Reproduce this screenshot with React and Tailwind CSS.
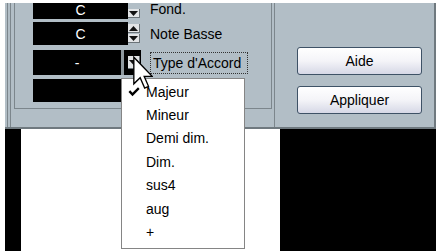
import React from 'react';

const items = ['Majeur', 'Mineur', 'Demi dim.', 'Dim.', 'sus4', 'aug', '+'];

const Tri = ({ up }) => (
  <svg width="9" height="5" viewBox="0 0 9 5">
    <path d={up ? 'M0 5 L4.5 0 L9 5 Z' : 'M0 0 L9 0 L4.5 5 Z'} fill="#111" />
  </svg>
);

const SpinBtn = ({ up, h = 'h-[9px]' }) => (
  <div className={`w-[12px] ${h} bg-[#e2e4e6] border-b border-r border-[#6b7378] flex items-center justify-center`}>
    <Tri up={up} />
  </div>
);

const Field = ({ value, w = 'w-[95px]' }) => (
  <div className={`${w} h-full bg-black text-white flex items-center justify-center`}>{value}</div>
);

const Button = ({ children, mt }) => (
  <div
    className={`${mt} w-[125px] h-[28px] rounded-[3px] border border-[#3e5266] bg-gradient-to-b from-white via-[#f4f4f8] to-[#d6d8e6] flex items-center justify-center text-black`}
  >
    {children}
  </div>
);

export default function App() {
  return (
    <div className="relative w-[440px] h-[251px] overflow-hidden bg-white text-[14px] leading-none font-['Liberation_Sans',Arial,sans-serif]">
      <div className="h-[3px]" />
      {/* dialog */}
      <div className="ml-[5px] w-[431px] h-[126px] flex bg-[#b2bec6] border-r-2 border-b-2 border-[#6f797f]">
        {/* left pane */}
        <div className="w-[269px] h-full pl-[2px] flex">
          <div className="h-full border-l border-[#7c868c] pl-[2px] flex">
            <div className="h-full border-l border-[#7c868c] flex-1 pl-[3px]">
              <div className="w-[258px] h-[106px] border-l border-r border-b border-[#7c868c] pl-[18px] flex flex-col text-black">
                {/* row 1 */}
                <div className="h-[16px] flex items-center">
                  <div className="w-[95px] h-full bg-black text-white flex items-end justify-center pb-[2px]">C</div>
                  <div className="w-[13px] h-full flex flex-col justify-end pb-[1px]">
                    <SpinBtn />
                  </div>
                  <div className="ml-[9px] self-start mt-[-1px]">Fond.</div>
                </div>
                {/* row 2 */}
                <div className="mt-[3px] h-[23px] flex items-center">
                  <Field value="C" />
                  <div className="w-[13px] h-full flex flex-col justify-center gap-[1px]">
                    <SpinBtn up />
                    <SpinBtn />
                  </div>
                  <div className="ml-[9px]">Note Basse</div>
                </div>
                {/* row 3 */}
                <div className="mt-[5px] h-[25px] flex items-center">
                  <Field value="-" w="w-[88px]" />
                  <div className="w-[3px] h-full bg-[#8e989e]" />
                  <div className="w-[4px] h-full bg-black" />
                  <div className="w-[13px] h-full bg-black flex items-center">
                    <SpinBtn h="h-[13px]" />
                  </div>
                  <div className="ml-[9px] h-[22px] w-[98px] px-[2px] border border-dotted border-[#333] flex items-center">
                    Type d'Accord
                  </div>
                </div>
                {/* row 4 */}
                <div className="mt-[4px] h-[23px] flex items-center">
                  <Field value="" />
                </div>
              </div>
            </div>
          </div>
        </div>
        {/* right pane */}
        <div className="flex-1 h-full border-l border-[#7c868c] pl-[22px] flex flex-col">
          <Button mt="mt-[44px]">Aide</Button>
          <Button mt="mt-[11px]">Appliquer</Button>
        </div>
      </div>
      {/* below dialog */}
      <div className="flex h-[122px]">
        <div className="w-[5px]" />
        <div className="w-[16px] bg-black" />
        <div className="w-[259px] bg-white" />
        <div className="w-[156px] bg-black" />
      </div>

      {/* popup menu */}
      <div className="absolute left-[121px] top-[78px] w-[124px] h-[171px] bg-white border border-[#858585] pt-[1px] text-black">
        {items.map((it, i) => (
          <div key={it} className="relative h-[23.4px] pl-[24px] flex items-center">
            {i === 0 && (
              <svg className="absolute left-[6px] top-[7px]" width="12" height="10" viewBox="0 0 12 10">
                <path d="M0.5 5 L2.2 3.3 L4.5 5.8 L10 0.3 L11.6 2 L4.5 9.3 Z" fill="#000" />
              </svg>
            )}
            {it}
          </div>
        ))}
      </div>

      {/* mouse cursor */}
      <svg className="absolute left-[133px] top-[56px]" width="20" height="34" viewBox="0 0 12 20">
        <path
          d="M0.5 0.5 L0.5 16.5 L4.3 12.8 L7 19 L9.3 18 L6.7 12 L11.5 12 Z"
          fill="#fff"
          stroke="#000"
          strokeWidth="0.8"
          strokeLinejoin="miter"
        />
      </svg>
    </div>
  );
}
